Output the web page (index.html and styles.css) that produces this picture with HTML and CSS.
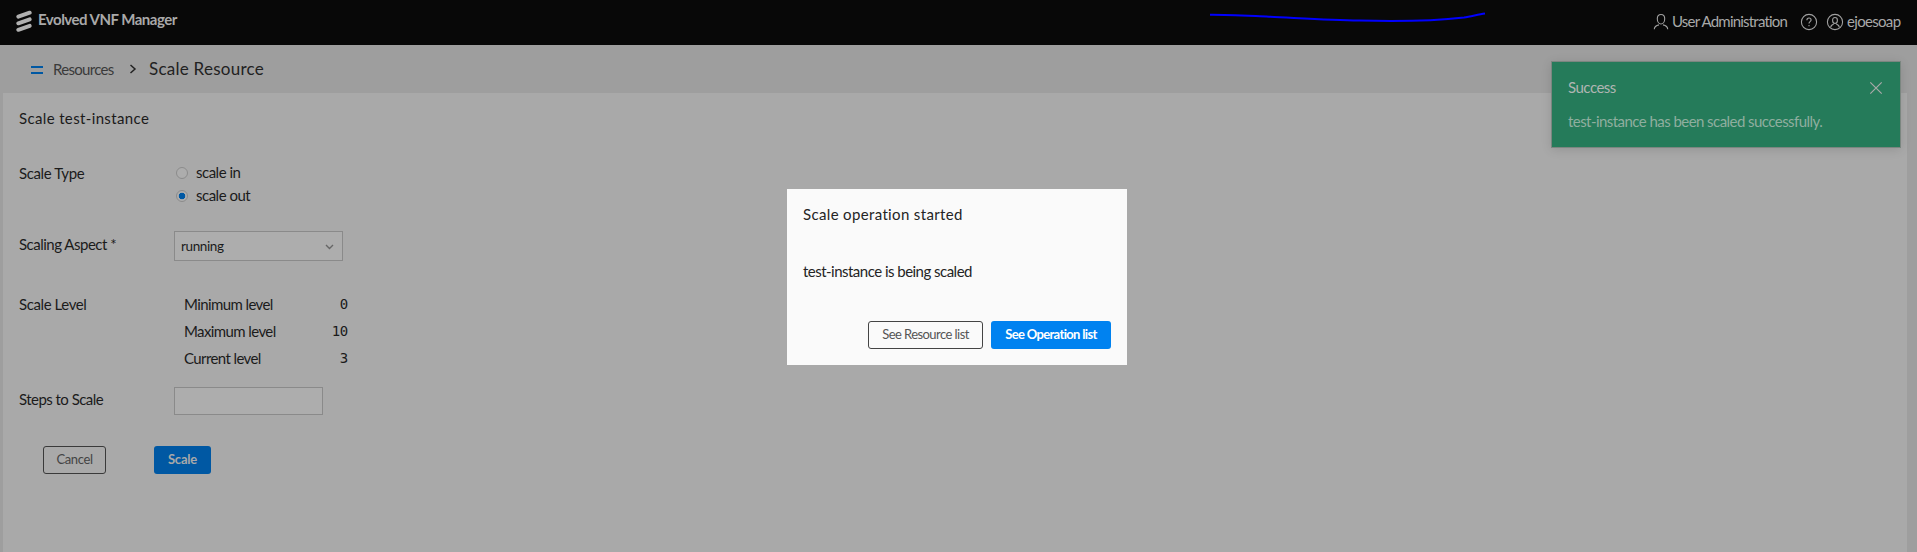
FILE: index.html
```html
<!DOCTYPE html>
<html lang="en">
<head>
<meta charset="utf-8">
<title>Evolved VNF Manager</title>
<link rel="stylesheet" href="styles.css">
</head>
<body>
<header class="topbar">
  <svg class="logo" width="16" height="22" viewBox="0 0 16 22"><path d="M2.3 6.700 13.700 2.700M2.300 13.300 13.700 9.300M2.300 19.800 13.700 15.800"/></svg>
  <span class="brand">Evolved VNF Manager</span>
  <nav class="tools">
    <svg class="ico person" width="16" height="18" viewBox="0 0 16 18"><path d="M8 1.500c-2.600 0-3.700 1.700-3.700 4.200S5.600 11 8 11s3.700-2.800 3.700-5.300S10.600 1.500 8 1.500zM1.300 16.300c0-2.600 1.700-3.800 4.700-4.400M14.700 16.300c0-2.600-1.700-3.800-4.700-4.400"/></svg>
    <span class="admin">User Administration</span>
    <svg class="ico help" width="18" height="18" viewBox="0 0 18 18"><circle cx="9" cy="9" r="7.600"/><path d="M6.900 7.200c0-1.400.9-2.200 2.100-2.200s2.100.8 2.100 2c0 1.700-2.100 1.700-2.100 3.500M9 12v1.300"/></svg>
    <svg class="ico account" width="18" height="18" viewBox="0 0 18 18"><circle cx="9" cy="9" r="7.600"/><path d="M9 4.500c-1.700 0-2.400 1.100-2.400 2.700S7.500 10.500 9 10.500s2.400-1.700 2.400-3.300S10.700 4.500 9 4.500zM4.800 14.200c0-1.700 1-2.600 2.900-3M13.200 14.200c0-1.700-1-2.600-2.900-3"/></svg>
    <span class="user">ejoesoap</span>
  </nav>
  <svg class="stroke" width="280" height="14" viewBox="0 0 280 14"><path d="M1 4.700C15 4.500 35 5.600 60 6.700S120 9.800 150 10.600 225 11 255 7.500C262 6.500 269 4.500 276 3.500"/></svg>
</header>
<div class="crumbs">
  <span class="menu"></span>
  <span class="crumb">Resources</span>
  <svg class="sep" width="8" height="10" viewBox="0 0 8 10"><path d="M1.500 1 6 5 1.500 9"/></svg>
  <span class="here">Scale Resource</span>
</div>
<main class="panel">
  <h1 class="heading">Scale test-instance</h1>
  <div class="row type">
    <span class="label">Scale Type</span>
    <div class="radios">
      <div class="radio"><i class="dot"></i><span>scale in</span></div>
      <div class="radio"><i class="dot on"></i><span>scale out</span></div>
    </div>
  </div>
  <div class="row aspect">
    <span class="label">Scaling Aspect *</span>
    <div class="select"><span class="value">running</span><svg class="caret" width="9" height="6" viewBox="0 0 9 6"><path d="M1 1 4.500 4.500 8 1"/></svg></div>
  </div>
  <div class="row levels">
    <span class="label">Scale Level</span>
    <dl class="table">
      <dt>Minimum level</dt><dd>0</dd>
      <dt>Maximum level</dt><dd>10</dd>
      <dt>Current level</dt><dd>3</dd>
    </dl>
  </div>
  <div class="row steps">
    <span class="label">Steps to Scale</span>
    <div class="input"></div>
  </div>
  <div class="actions">
    <button class="btn cancel">Cancel</button>
    <button class="btn primary scale">Scale</button>
  </div>
</main>
<aside class="toast">
  <div class="toast-head"><span class="toast-title">Success</span><svg class="close" width="14" height="14" viewBox="0 0 14 14"><path d="M1.300 1.300 12.700 12.700M12.700 1.300 1.300 12.700"/></svg></div>
  <span class="toast-text">test-instance has been scaled successfully.</span>
</aside>
<section class="dialog">
  <h2 class="dialog-title">Scale operation started</h2>
  <p class="dialog-text">test-instance is being scaled</p>
  <div class="dialog-actions">
    <button class="btn list">See Resource list</button>
    <button class="btn primary bright">See Operation list</button>
  </div>
</section>
</body>
</html>
```

FILE: styles.css
```css
* { box-sizing: border-box; }

body {
  margin: 0;
  height: 552px;
  overflow: hidden;
  background: #9e9e9e;
  color: #1b1b1b;
  font: 15px/20px Lato, "Open Sans", sans-serif;
  letter-spacing: -.48px;
}

svg { display: block; fill: none; flex: none; }
span { white-space: nowrap; }

/* Top bar */
.topbar {
  position: relative;
  display: flex;
  align-items: flex-start;
  height: 45px;
  padding: 9px 16px 0 16px;
  background: #080808;
  color: #a9a9a9;
}
.logo { margin-top: 1px; stroke: #b0b0b0; stroke-width: 3.9; stroke-linecap: round; }
.brand { margin-left: 6px; font-weight: 700; letter-spacing: -.51px; }
.tools { display: flex; width: 248px; margin-left: auto; }
.ico { stroke: #a0a0a0; stroke-width: 1.1; margin-top: 4px; }
.admin { width: 116px; margin: 2px 12px 0 3px; letter-spacing: -.8px; }
.account { margin: 4px 3px 0 8px; }
.user { margin-top: 2px; letter-spacing: -.68px; }
.stroke { position: absolute; left: 1209px; top: 10px; stroke: #0000fe; stroke-width: 2; }

/* Breadcrumbs */
.crumbs { display: flex; height: 48px; padding: 14px 0 0 31px; color: #3a3a3a; }
.menu { width: 12px; height: 8px; margin: 7px 10px 0 0; border: solid #0058a3; border-width: 2px 0; }
.crumb { width: 61px; letter-spacing: -.7px; }
.sep { margin: 5px 12px 0 15px; stroke: #222; stroke-width: 1.5; }
.here { color: #222; font-size: 17px; letter-spacing: .25px; }

/* Form panel */
.panel { height: 459px; margin: 0 10px 0 3px; padding: 15px 0 0 16px; background: #a9a9a9; }
.heading { height: 20px; margin: 0; font-size: 15px; font-weight: 400; letter-spacing: .36px; }
.row { display: flex; }
.label { width: 155px; letter-spacing: -.4px; }
.type { height: 68px; margin-top: 35px; }
.radios { margin-top: -1px; padding-left: 2px; }
.radio { display: flex; gap: 8px; height: 23px; letter-spacing: -.5px; }
.dot { width: 12px; height: 12px; margin-top: 5px; border: 1px solid #8c8c8c; border-radius: 50%; background: #adadad; }
.on { background: radial-gradient(circle, #0058a3 3px, #adadad 3.600px); }
.aspect .label { padding-top: 3px; letter-spacing: -.5px; }
.select {
  display: flex;
  justify-content: space-between;
  width: 169px;
  height: 30px;
  padding: 4px 8px 0 6px;
  border: 1px solid #8a8a8a;
  background: #adadad;
  font-size: 13.5px;
}
.value { letter-spacing: -.4px; }
.caret { margin-top: 8px; stroke: #666; stroke-width: 1.4; }
.levels { margin-top: 33px; }
.table { display: grid; grid-template-columns: 120px 44px; grid-auto-rows: 27px; margin: 0 0 0 10px; letter-spacing: -.6px; }
.table dd { margin: 0; text-align: right; font: 14px/20px "DejaVu Sans Mono", monospace; letter-spacing: -.3px; }
.steps { margin-top: 12px; }
.steps .label { padding-top: 2px; letter-spacing: -.54px; }
.input { width: 149px; height: 28px; border: 1px solid #8a8a8a; background: #adadad; }
.actions { display: flex; gap: 48px; padding: 31px 0 0 24px; }

.btn {
  height: 28px;
  padding: 0 0 2px;
  border: 1px solid #3a3a3a;
  border-radius: 3px;
  background: none;
  color: #444;
  font: 13px/18px Lato, "Open Sans", sans-serif;
  letter-spacing: -.38px;
  white-space: nowrap;
}
.cancel { width: 63px; }
.scale { width: 57px; }
.primary { border: 0; background: #0058a3; color: #a9a9a9; font-weight: 700; letter-spacing: -.2px; }

/* Notification */
.toast {
  position: absolute;
  left: 1551px;
  top: 61px;
  width: 350px;
  height: 87px;
  padding: 15px 16px;
  border: 1px solid #7b8680;
  background: #257b5a;
  color: #a9a9a9;
  box-shadow: 0 2px 10px rgba(0, 0, 0, .12);
}
.toast-head { display: flex; justify-content: space-between; height: 34px; }
.toast-title { color: #b0b5b2; letter-spacing: -.5px; }
.close { margin: 4px 1px 0 0; stroke: #a9a9a9; stroke-width: 1.2; }
.toast-text { color: #8fae9f; letter-spacing: -.55px; }

/* Dialog */
.dialog {
  position: absolute;
  left: 787px;
  top: 189px;
  width: 340px;
  height: 176px;
  padding: 15px 16px;
  background: #fafafa;
  color: #242424;
}
.dialog-title { margin: 0; font-size: 15px; font-weight: 400; letter-spacing: .35px; }
.dialog-text { margin: 37px 0 40px; letter-spacing: -.52px; }
.dialog-actions { display: flex; justify-content: flex-end; gap: 8px; }
.list { width: 115px; border-color: #444; color: #555; letter-spacing: -.56px; }
.bright { width: 120px; background: #0082f0; color: #fff; letter-spacing: -.66px; }
```
